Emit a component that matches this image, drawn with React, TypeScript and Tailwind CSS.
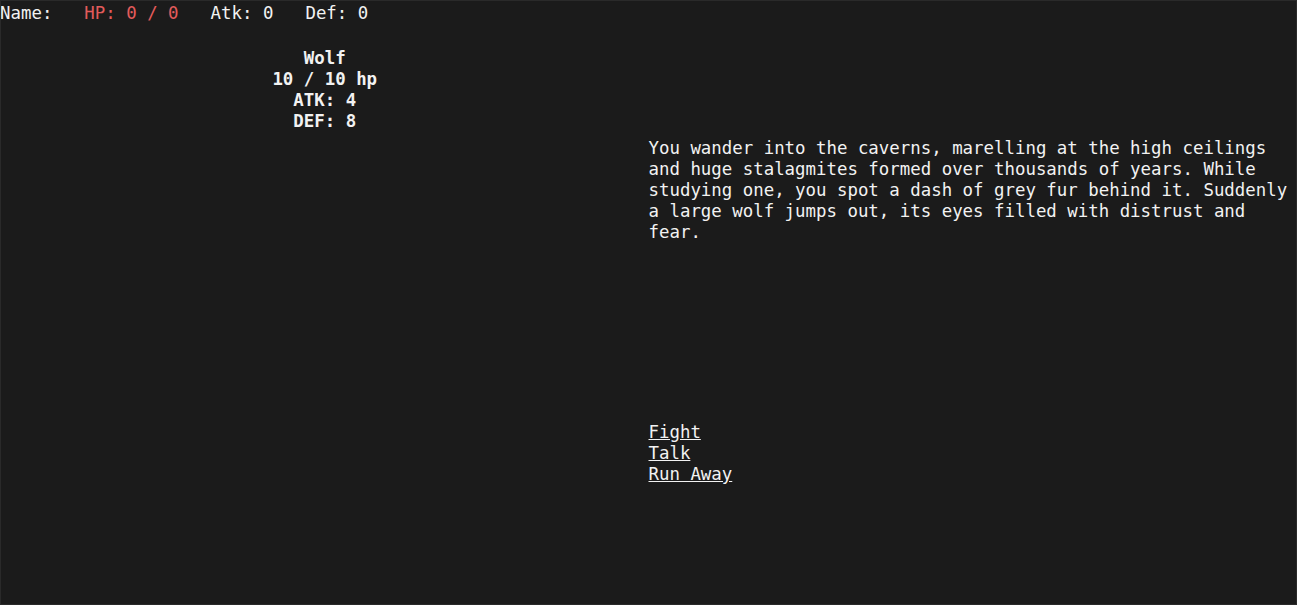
const choices = ["Fight", "Talk", "Run Away"];

const App = () => {
  return (
    <div className="h-screen w-full overflow-hidden bg-[#1b1b1b] text-[#f2f2f2] font-['DejaVu_Sans_Mono',monospace] text-[17.4px] leading-[21px] border border-[#2a2a2a]">
      <div className="flex gap-[32px] -mt-[1px] -ml-[1px] pt-[3px]">
        <span>Name:</span>
        <span className="text-[#e35b5b]">HP: 0 / 0</span>
        <span>Atk: 0</span>
        <span>Def: 0</span>
      </div>

      <div className="flex">
        <div className="w-1/2 pt-[24px] text-center font-bold">
          <p>Wolf</p>
          <p>10 / 10 hp</p>
          <p>ATK: 4</p>
          <p>DEF: 8</p>
        </div>
        <div className="w-1/2 pt-[114px] pr-[4px]">
          <p>
            You wander into the caverns, marelling at the high ceilings and
            huge stalagmites formed over thousands of years. While studying
            one, you spot a dash of grey fur behind it. Suddenly a large wolf
            jumps out, its eyes filled with distrust and fear.
          </p>
          <div className="mt-[179px] flex flex-col items-start">
            {choices.map((c) => (
              <a key={c} href="#" className="underline">
                {c}
              </a>
            ))}
          </div>
        </div>
      </div>
    </div>
  );
};

export default App;
